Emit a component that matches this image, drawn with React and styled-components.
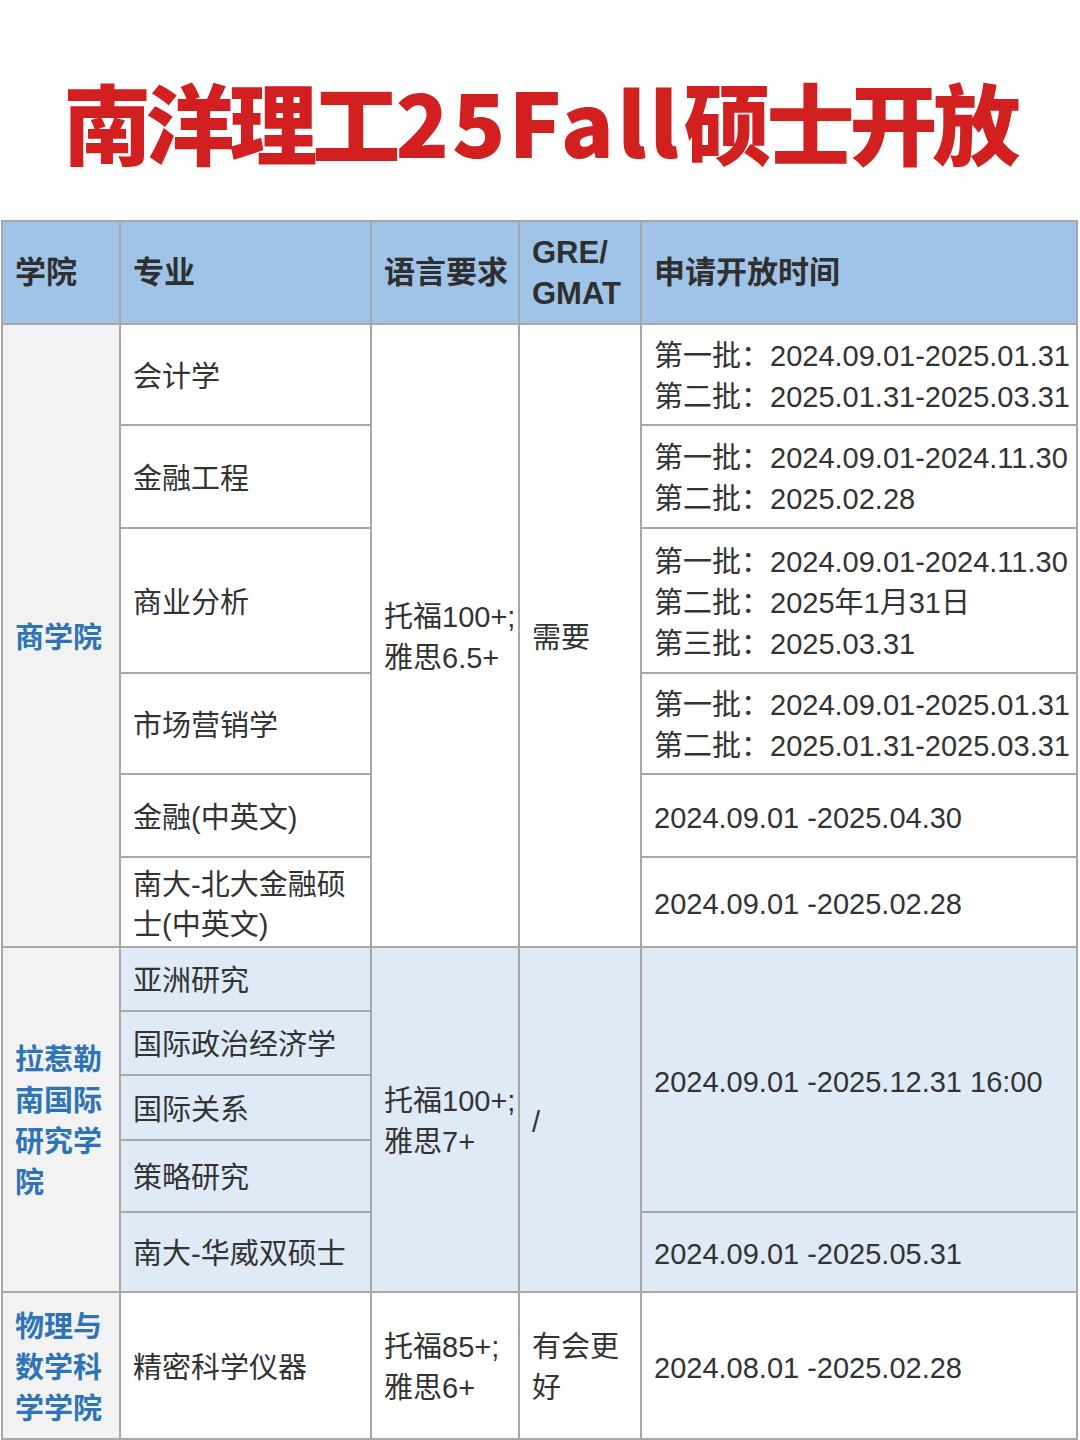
import React from "react";
import styled, { createGlobalStyle } from "styled-components";

const GlobalStyle = createGlobalStyle`
  html, body {
    margin: 0;
    padding: 0;
    background: #ffffff;
  }
  body {
    font-family: "Liberation Sans", "Noto Sans CJK SC", sans-serif;
    color: #333333;
  }
`;

const Page = styled.div`
  width: 1080px;
  padding: 0 2px 0 1px;
  box-sizing: border-box;
`;

const Title = styled.h1`
  margin: 0;
  height: 220px;
  padding-top: 18px;
  box-sizing: border-box;
  display: flex;
  align-items: center;
  justify-content: center;
  font-family: "Noto Sans CJK SC", sans-serif;
  font-weight: 900;
  font-size: 88px;
  letter-spacing: -5px;
  color: #d21f1f;
`;

const TitleLatin = styled.span`
  letter-spacing: 3px;
  margin-right: 2px;
`;

const Table = styled.table`
  width: 100%;
  border-collapse: collapse;
  table-layout: fixed;
  font-size: 29px;
`;

const Row = styled.tr`
  height: ${(p) => p.$h}px;
`;

const HeadCell = styled.th`
  background: #9fc4e7;
  border: 2px solid #a8a8a8;
  padding: 0 0 0 12px;
  text-align: left;
  font-weight: 700;
  font-size: 31px;
  line-height: 41px;
  white-space: nowrap;
  color: #2f2f2f;
  font-family: "Liberation Sans", "Noto Sans CJK SC", sans-serif;
`;

const SchoolCell = styled.td`
  background: #f2f2f2;
  border: 2px solid #a8a8a8;
  padding: 5px 12px 0;
  font-weight: 700;
  color: #2e74b6;
  line-height: 41px;
  vertical-align: middle;
`;

const Cell = styled.td`
  background: ${(p) => (p.$tint ? "#deeaf6" : "#ffffff")};
  border: 2px solid #a8a8a8;
  padding: ${(p) => (p.$tight ? "5px 0 0 12px" : "5px 12px 0")};
  line-height: ${(p) => (p.$lh ? p.$lh : 41)}px;
  vertical-align: middle;
  white-space: ${(p) => (p.$nowrap ? "nowrap" : "normal")};
  overflow: visible;
`;

const Lines = ({ items }) =>
  items.map((t, i) => (
    <React.Fragment key={i}>
      {i > 0 && <br />}
      {t}
    </React.Fragment>
  ));

export default function App() {
  return (
    <Page>
      <GlobalStyle />
      <Title>
        南洋理工<TitleLatin>25Fall</TitleLatin>硕士开放
      </Title>
      <Table>
        <colgroup>
          <col style={{ width: 118 }} />
          <col style={{ width: 251 }} />
          <col style={{ width: 148 }} />
          <col style={{ width: 122 }} />
          <col style={{ width: 436 }} />
        </colgroup>
        <thead>
          <Row $h={103}>
            <HeadCell>学院</HeadCell>
            <HeadCell>专业</HeadCell>
            <HeadCell>语言要求</HeadCell>
            <HeadCell>
              <Lines items={["GRE/", "GMAT"]} />
            </HeadCell>
            <HeadCell>申请开放时间</HeadCell>
          </Row>
        </thead>
        <tbody>
          <Row $h={101}>
            <SchoolCell rowSpan={6}>商学院</SchoolCell>
            <Cell>会计学</Cell>
            <Cell rowSpan={6} $tight $nowrap>
              <Lines items={["托福100+;", "雅思6.5+"]} />
            </Cell>
            <Cell rowSpan={6}>需要</Cell>
            <Cell $tight $nowrap>
              <Lines items={["第一批：2024.09.01-2025.01.31", "第二批：2025.01.31-2025.03.31"]} />
            </Cell>
          </Row>
          <Row $h={103}>
            <Cell>金融工程</Cell>
            <Cell $tight $nowrap>
              <Lines items={["第一批：2024.09.01-2024.11.30", "第二批：2025.02.28"]} />
            </Cell>
          </Row>
          <Row $h={145}>
            <Cell>商业分析</Cell>
            <Cell $tight $nowrap>
              <Lines
                items={["第一批：2024.09.01-2024.11.30", "第二批：2025年1月31日", "第三批：2025.03.31"]}
              />
            </Cell>
          </Row>
          <Row $h={101}>
            <Cell>市场营销学</Cell>
            <Cell $tight $nowrap>
              <Lines items={["第一批：2024.09.01-2025.01.31", "第二批：2025.01.31-2025.03.31"]} />
            </Cell>
          </Row>
          <Row $h={83}>
            <Cell>金融(中英文)</Cell>
            <Cell $tight $nowrap>2024.09.01 -2025.04.30</Cell>
          </Row>
          <Row $h={90}>
            <Cell $lh={40}>南大-北大金融硕士(中英文)</Cell>
            <Cell $tight $nowrap>2024.09.01 -2025.02.28</Cell>
          </Row>

          <Row $h={64}>
            <SchoolCell rowSpan={5}>拉惹勒南国际研究学院</SchoolCell>
            <Cell $tint>亚洲研究</Cell>
            <Cell $tint rowSpan={5} $tight $nowrap>
              <Lines items={["托福100+;", "雅思7+"]} />
            </Cell>
            <Cell $tint rowSpan={5}>/</Cell>
            <Cell $tint rowSpan={4} $tight $nowrap>
              2024.09.01 -2025.12.31 16:00
            </Cell>
          </Row>
          <Row $h={64}>
            <Cell $tint>国际政治经济学</Cell>
          </Row>
          <Row $h={65}>
            <Cell $tint>国际关系</Cell>
          </Row>
          <Row $h={72}>
            <Cell $tint>策略研究</Cell>
          </Row>
          <Row $h={80}>
            <Cell $tint>南大-华威双硕士</Cell>
            <Cell $tint $tight $nowrap>2024.09.01 -2025.05.31</Cell>
          </Row>

          <Row $h={147}>
            <SchoolCell>物理与数学科学学院</SchoolCell>
            <Cell>精密科学仪器</Cell>
            <Cell $tight $nowrap>
              <Lines items={["托福85+;", "雅思6+"]} />
            </Cell>
            <Cell>有会更好</Cell>
            <Cell $tight $nowrap>2024.08.01 -2025.02.28</Cell>
          </Row>
        </tbody>
      </Table>
    </Page>
  );
}
